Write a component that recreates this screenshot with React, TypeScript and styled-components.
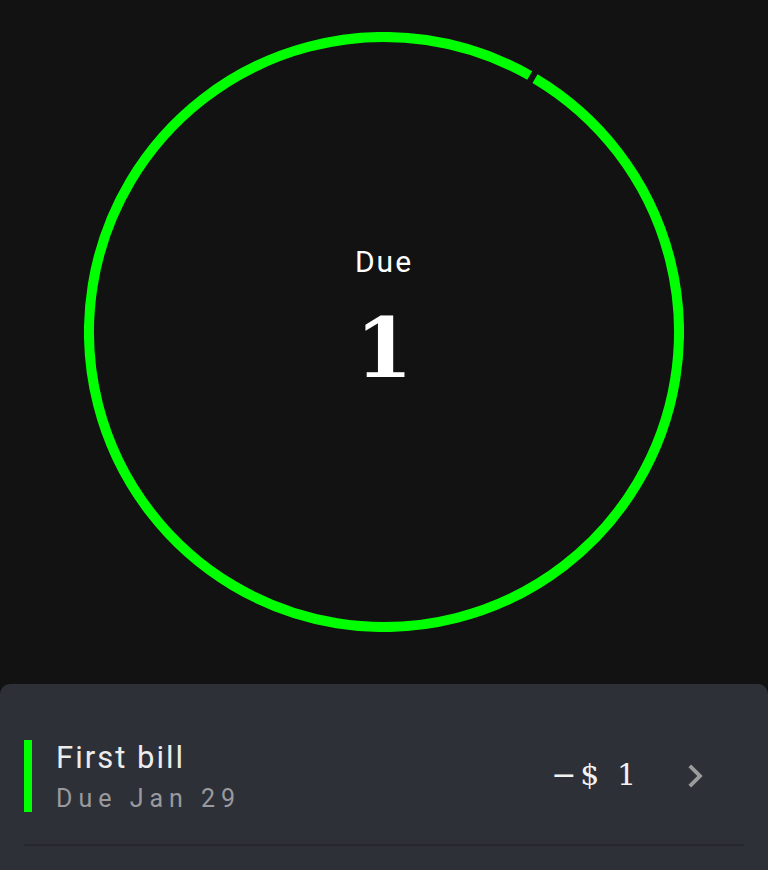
import styled, { createGlobalStyle } from "styled-components";

const GlobalStyle = createGlobalStyle`
  body {
    margin: 0;
    background-color: #121212;
    font-family: Roboto, "Liberation Sans", sans-serif;
    overflow: hidden;
  }
`;

const StyledPage = styled.div`
  display: flex;
  flex-direction: column;
  align-items: center;
  width: 768px;
  min-height: 870px;
  background-color: #121212;
`;
const StyledRing = styled.div`
  display: grid;
  width: 600px;
  height: 600px;
  margin-top: 32px;
  & > * {
    grid-area: 1 / 1;
  }
`;
const StyledCenter = styled.div`
  display: flex;
  flex-direction: column;
  align-items: center;
  padding-top: 215px;
  color: #ffffff;
`;
const StyledLabel = styled.div`
  font-size: 30px;
  line-height: 30px;
  letter-spacing: 2px;
`;
const StyledCount = styled.div`
  margin-top: 30px;
  font-family: "DejaVu Serif", serif;
  font-weight: bold;
  font-size: 82px;
  line-height: 82px;
`;
const StyledCard = styled.div`
  align-self: stretch;
  margin-top: 52px;
  padding-bottom: 40px;
  background-color: #2e3038;
  border-radius: 10px;
`;
const StyledRow = styled.div`
  display: flex;
  align-items: center;
  padding: 56px 24px 32px 24px;
`;
const StyledBar = styled.div<{ color: string }>`
  width: 8px;
  height: 72px;
  background-color: ${({ color }) => color};
`;
const StyledInfo = styled.div`
  display: flex;
  flex-direction: column;
  margin-left: 24px;
  flex: 1;
`;
const StyledTitle = styled.div`
  font-size: 31px;
  line-height: 31px;
  letter-spacing: 2px;
  color: #ececec;
`;
const StyledSub = styled.div`
  margin-top: 13px;
  font-size: 25px;
  line-height: 25px;
  letter-spacing: 6px;
  color: #9a9a9e;
`;
const StyledAmount = styled.div`
  margin-top: -4px;
  font-family: "DejaVu Serif", serif;
  font-size: 30px;
  letter-spacing: 4px;
  color: #f2f2f2;
`;
const StyledChevron = styled.svg`
  width: 46px;
  height: 46px;
  margin-left: 32px;
  margin-right: 26px;
  fill: #9b9b9b;
`;
const StyledDivider = styled.div`
  height: 2px;
  margin: 0 24px;
  background-color: #25272d;
`;

const R = 295;
const C = 2 * Math.PI * R;

const Ring = () => (
  <svg width="600" height="600" viewBox="0 0 600 600">
    <circle
      cx="300"
      cy="300"
      r={R}
      fill="none"
      stroke="#00ff00"
      strokeWidth="10"
      strokeDasharray={`${C - 7} 7`}
      transform="rotate(-59.2 300 300)"
    />
  </svg>
);

const bills = [{ name: "First bill", due: "Due Jan 29", amount: "−$ 1" }];

export default function App() {
  return (
    <StyledPage>
      <GlobalStyle />
      <StyledRing>
        <Ring />
        <StyledCenter>
          <StyledLabel>Due</StyledLabel>
          <StyledCount>1</StyledCount>
        </StyledCenter>
      </StyledRing>
      <StyledCard>
        {bills.map((bill) => (
          <div key={bill.name}>
            <StyledRow>
              <StyledBar color="#00ff00" />
              <StyledInfo>
                <StyledTitle>{bill.name}</StyledTitle>
                <StyledSub>{bill.due}</StyledSub>
              </StyledInfo>
              <StyledAmount>{bill.amount}</StyledAmount>
              <StyledChevron viewBox="0 0 24 24">
                <path d="M10 6L8.59 7.41 13.17 12l-4.58 4.59L10 18l6-6z" />
              </StyledChevron>
            </StyledRow>
            <StyledDivider />
          </div>
        ))}
      </StyledCard>
    </StyledPage>
  );
}
